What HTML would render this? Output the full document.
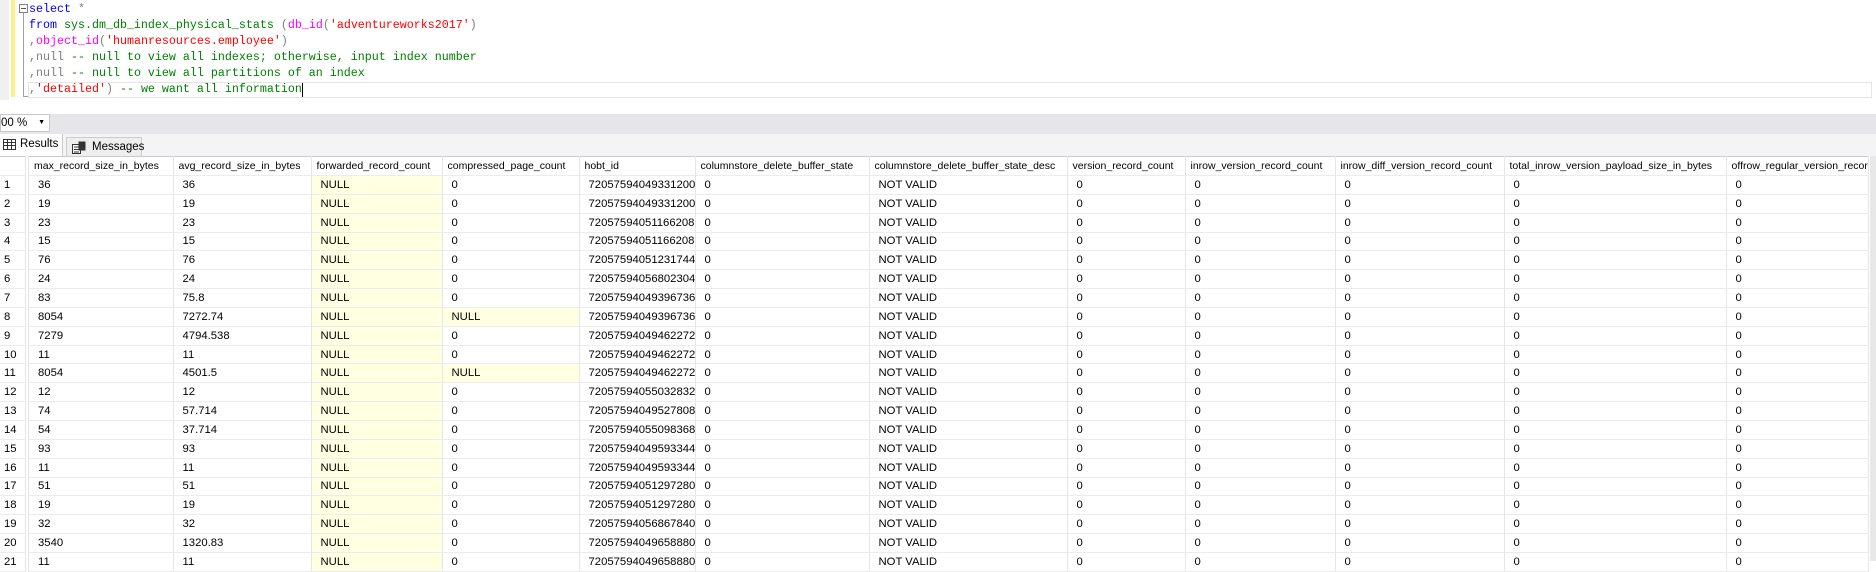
<!DOCTYPE html>
<html><head><meta charset="utf-8"><style>
*{margin:0;padding:0;box-sizing:border-box}
body{width:1876px;height:561px;overflow:hidden;background:#fff;position:relative;font-family:"Liberation Sans",sans-serif}
.gut{position:absolute;left:0;top:0;width:9px;height:100px;background:#f0f0f0}
.ybar{position:absolute;left:11px;top:0;width:4px;height:97px;background:#ffef8a}
.code{position:absolute;left:29px;top:1px;font-family:"Liberation Mono",monospace;font-size:11.67px;line-height:16px;white-space:pre;color:#000}
.k{color:#0000ff}.g{color:#808080}.m{color:#ff00ff}.r{color:#ff0000}.c{color:#008000}.s{color:#008000}
.box{position:absolute;left:19px;top:4px;width:9px;height:9px;border:1px solid #808080;background:#fff}
.box:after{content:"";position:absolute;left:1px;top:3px;width:5px;height:1px;background:#555}
.vline{position:absolute;left:23px;top:13px;width:1px;height:84px;background:#a0a0a0}
.tick{position:absolute;left:23px;top:96px;width:5px;height:1px;background:#a0a0a0}
.curl{position:absolute;left:28px;top:82px;width:1844px;height:16px;border:1px solid #e4e4e4}
.cursor{position:absolute;left:302px;top:83px;width:1px;height:14px;background:#000}
.zbar{position:absolute;left:0;top:114px;width:1876px;height:20px;background:#e6e6ea}
.combo{position:absolute;left:0;top:114px;width:50px;height:18px;background:#fff;border:1px solid #c8c8c8;font-size:11.5px;line-height:16px;padding-left:0}
.combo span{position:absolute;right:4px;top:0;font-size:7px}
.tabs{position:absolute;left:0;top:134px;width:1876px;height:22px;background:#f4f4f6}
.t1{position:absolute;left:0;top:134px;width:63px;height:22px;background:#fff;border-right:1px solid #ccc;font-size:11.5px;line-height:20px;padding-left:20px}
.t2{position:absolute;left:66px;top:137px;width:76px;height:19px;background:#eee;border:1px solid #ccc;border-bottom:none;font-size:11.5px;line-height:18px;padding-left:25px}
table{position:absolute;left:0;top:156px;width:1868px;border-collapse:collapse;table-layout:fixed;font-size:11.3px;color:#000;border-top:1px solid #ccc}
td{border-right:1px solid #e6e6e6;border-bottom:1px solid #ececec;height:18.85px;padding:0 0 0 9px;white-space:nowrap;overflow:hidden}
td:first-child{padding-left:4px;border-right:4px double #e6e6e6}
tr.h td{padding-left:5px;height:19px;font-size:10.5px}
.n{background:#ffffe1}
.sb{position:absolute;left:1870px;top:156px;width:6px;height:405px;background:#e8e8e8}
</style></head><body>
<div class="gut"></div><div class="ybar"></div>
<div class="vline"></div><div class="tick"></div><div class="box"></div>
<div class="curl"></div>
<div class="code"><span class="k">select</span> <span class="g">*</span>
<span class="k">from</span> <span class="s">sys.dm_db_index_physical_stats</span> <span class="g">(</span><span class="m">db_id</span><span class="g">(</span><span class="r">'adventureworks2017'</span><span class="g">)</span>
<span class="g">,</span><span class="m">object_id</span><span class="g">(</span><span class="r">'humanresources.employee'</span><span class="g">)</span>
<span class="g">,null</span> <span class="c">-- null to view all indexes; otherwise, input index number</span>
<span class="g">,null</span> <span class="c">-- null to view all partitions of an index</span>
<span class="g">,</span><span class="r">'detailed'</span><span class="g">)</span> <span class="c">-- we want all information</span></div>
<div class="cursor"></div>
<div class="zbar"></div>
<div class="combo">00 %<span>▼</span></div>
<div class="tabs"></div>
<div class="t1"><svg style="position:absolute;left:3px;top:5px" width="13" height="11"><rect x="0.5" y="0.5" width="12" height="10" fill="none" stroke="#333"/><path d="M0 3.5H13M0 6.5H13M4.5 0V11M8.5 0V11" stroke="#333"/></svg>Results</div>
<div class="t2"><svg style="position:absolute;left:5px;top:3px" width="14" height="13"><rect x="0.5" y="3.5" width="8" height="9" fill="#fff" stroke="#333"/><rect x="6.5" y="0.5" width="7" height="9" fill="#333"/><path d="M2 6H7M2 8.5H7M2 11H7" stroke="#333"/></svg>Messages</div>
<table>
<colgroup><col style="width:27px"><col style="width:146px"><col style="width:138px"><col style="width:131px"><col style="width:137px"><col style="width:116px"><col style="width:174px"><col style="width:198px"><col style="width:118px"><col style="width:150px"><col style="width:169px"><col style="width:222px"><col style="width:142px"></colgroup>
<tr class="h"><td></td><td>max_record_size_in_bytes</td><td>avg_record_size_in_bytes</td><td>forwarded_record_count</td><td>compressed_page_count</td><td>hobt_id</td><td>columnstore_delete_buffer_state</td><td>columnstore_delete_buffer_state_desc</td><td>version_record_count</td><td>inrow_version_record_count</td><td>inrow_diff_version_record_count</td><td>total_inrow_version_payload_size_in_bytes</td><td>offrow_regular_version_record_count</td></tr>
<tr><td>1</td><td>36</td><td>36</td><td class="n">NULL</td><td>0</td><td>72057594049331200</td><td>0</td><td>NOT VALID</td><td>0</td><td>0</td><td>0</td><td>0</td><td>0</td></tr>
<tr><td>2</td><td>19</td><td>19</td><td class="n">NULL</td><td>0</td><td>72057594049331200</td><td>0</td><td>NOT VALID</td><td>0</td><td>0</td><td>0</td><td>0</td><td>0</td></tr>
<tr><td>3</td><td>23</td><td>23</td><td class="n">NULL</td><td>0</td><td>72057594051166208</td><td>0</td><td>NOT VALID</td><td>0</td><td>0</td><td>0</td><td>0</td><td>0</td></tr>
<tr><td>4</td><td>15</td><td>15</td><td class="n">NULL</td><td>0</td><td>72057594051166208</td><td>0</td><td>NOT VALID</td><td>0</td><td>0</td><td>0</td><td>0</td><td>0</td></tr>
<tr><td>5</td><td>76</td><td>76</td><td class="n">NULL</td><td>0</td><td>72057594051231744</td><td>0</td><td>NOT VALID</td><td>0</td><td>0</td><td>0</td><td>0</td><td>0</td></tr>
<tr><td>6</td><td>24</td><td>24</td><td class="n">NULL</td><td>0</td><td>72057594056802304</td><td>0</td><td>NOT VALID</td><td>0</td><td>0</td><td>0</td><td>0</td><td>0</td></tr>
<tr><td>7</td><td>83</td><td>75.8</td><td class="n">NULL</td><td>0</td><td>72057594049396736</td><td>0</td><td>NOT VALID</td><td>0</td><td>0</td><td>0</td><td>0</td><td>0</td></tr>
<tr><td>8</td><td>8054</td><td>7272.74</td><td class="n">NULL</td><td class="n">NULL</td><td>72057594049396736</td><td>0</td><td>NOT VALID</td><td>0</td><td>0</td><td>0</td><td>0</td><td>0</td></tr>
<tr><td>9</td><td>7279</td><td>4794.538</td><td class="n">NULL</td><td>0</td><td>72057594049462272</td><td>0</td><td>NOT VALID</td><td>0</td><td>0</td><td>0</td><td>0</td><td>0</td></tr>
<tr><td>10</td><td>11</td><td>11</td><td class="n">NULL</td><td>0</td><td>72057594049462272</td><td>0</td><td>NOT VALID</td><td>0</td><td>0</td><td>0</td><td>0</td><td>0</td></tr>
<tr><td>11</td><td>8054</td><td>4501.5</td><td class="n">NULL</td><td class="n">NULL</td><td>72057594049462272</td><td>0</td><td>NOT VALID</td><td>0</td><td>0</td><td>0</td><td>0</td><td>0</td></tr>
<tr><td>12</td><td>12</td><td>12</td><td class="n">NULL</td><td>0</td><td>72057594055032832</td><td>0</td><td>NOT VALID</td><td>0</td><td>0</td><td>0</td><td>0</td><td>0</td></tr>
<tr><td>13</td><td>74</td><td>57.714</td><td class="n">NULL</td><td>0</td><td>72057594049527808</td><td>0</td><td>NOT VALID</td><td>0</td><td>0</td><td>0</td><td>0</td><td>0</td></tr>
<tr><td>14</td><td>54</td><td>37.714</td><td class="n">NULL</td><td>0</td><td>72057594055098368</td><td>0</td><td>NOT VALID</td><td>0</td><td>0</td><td>0</td><td>0</td><td>0</td></tr>
<tr><td>15</td><td>93</td><td>93</td><td class="n">NULL</td><td>0</td><td>72057594049593344</td><td>0</td><td>NOT VALID</td><td>0</td><td>0</td><td>0</td><td>0</td><td>0</td></tr>
<tr><td>16</td><td>11</td><td>11</td><td class="n">NULL</td><td>0</td><td>72057594049593344</td><td>0</td><td>NOT VALID</td><td>0</td><td>0</td><td>0</td><td>0</td><td>0</td></tr>
<tr><td>17</td><td>51</td><td>51</td><td class="n">NULL</td><td>0</td><td>72057594051297280</td><td>0</td><td>NOT VALID</td><td>0</td><td>0</td><td>0</td><td>0</td><td>0</td></tr>
<tr><td>18</td><td>19</td><td>19</td><td class="n">NULL</td><td>0</td><td>72057594051297280</td><td>0</td><td>NOT VALID</td><td>0</td><td>0</td><td>0</td><td>0</td><td>0</td></tr>
<tr><td>19</td><td>32</td><td>32</td><td class="n">NULL</td><td>0</td><td>72057594056867840</td><td>0</td><td>NOT VALID</td><td>0</td><td>0</td><td>0</td><td>0</td><td>0</td></tr>
<tr><td>20</td><td>3540</td><td>1320.83</td><td class="n">NULL</td><td>0</td><td>72057594049658880</td><td>0</td><td>NOT VALID</td><td>0</td><td>0</td><td>0</td><td>0</td><td>0</td></tr>
<tr><td>21</td><td>11</td><td>11</td><td class="n">NULL</td><td>0</td><td>72057594049658880</td><td>0</td><td>NOT VALID</td><td>0</td><td>0</td><td>0</td><td>0</td><td>0</td></tr>
</table>
<div class="sb"></div>
</body></html>
